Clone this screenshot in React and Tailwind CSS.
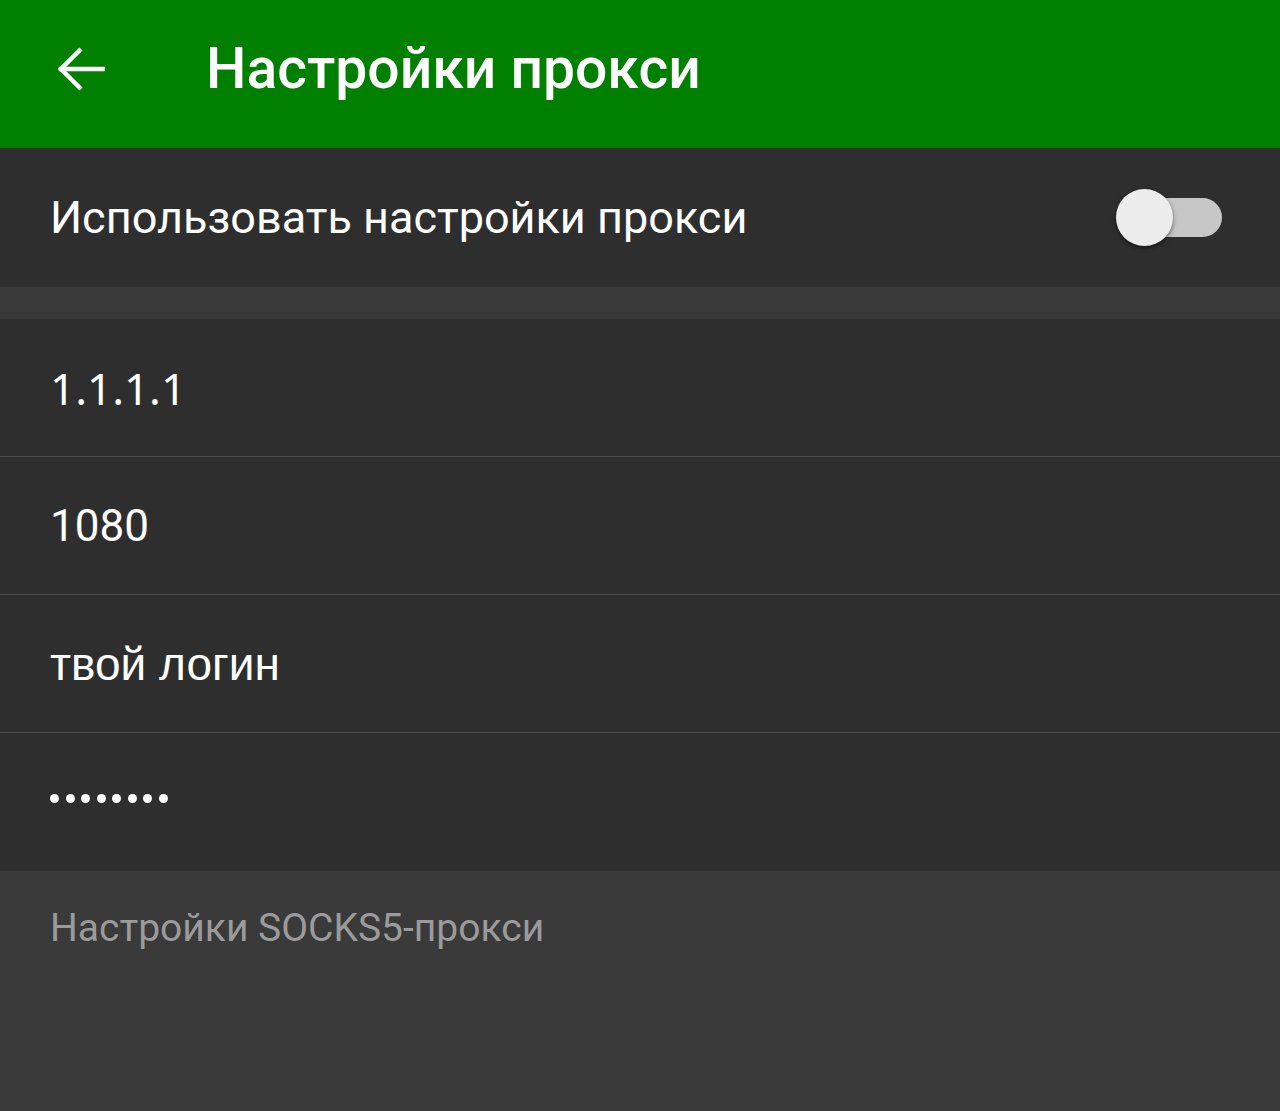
import React, { useState } from "react";

const rows = [
  { value: "1.1.1.1", font: "font-['Noto_Sans',sans-serif] text-[44px]" },
  { value: "1080", font: "font-['Roboto',sans-serif] text-[44px]" },
  { value: "твой логин", font: "font-['Liberation_Sans',sans-serif] text-[46px]" },
];

const App = () => {
  const [enabled, setEnabled] = useState(false);

  return (
    <div className="w-[1280px] h-[1111px] flex flex-col bg-[#3a3a3a] font-['Roboto',sans-serif]">
      {/* Toolbar */}
      <div className="h-[148px] bg-[#007f00] flex items-center shrink-0">
        <div className="w-[206px] pl-[57px] flex items-center pb-[10px]">
          <svg width="48" height="46" viewBox="0 0 48 46" fill="none" stroke="white" strokeWidth="4.5" strokeLinecap="square">
            <path d="M4 23H46" />
            <path d="M24 3L4 23L24 43" strokeLinecap="butt" />
          </svg>
        </div>
        <h1 className="text-white text-[57px] font-medium leading-none pb-[12px]">Настройки прокси</h1>
      </div>

      {/* Enable switch */}
      <div className="h-[139px] bg-[#2e2e2e] flex items-center justify-between pl-[50px] pr-[58px] shrink-0">
        <span className="text-white text-[45px] leading-none">Использовать настройки прокси</span>
        <button
          onClick={() => setEnabled(!enabled)}
          className="relative w-[106px] h-[57px] flex items-center"
        >
          <span className="absolute right-0 w-[92px] h-[39px] rounded-full bg-[#c6c6c6]" />
          <span className="absolute left-0 w-[57px] h-[57px] rounded-full bg-[#ececec] shadow-[0_2px_4px_rgba(0,0,0,0.5)]" />
        </button>
      </div>

      <div className="h-[32px] bg-[#393939] shrink-0" />

      {/* Fields */}
      <div className="bg-[#2e2e2e] flex flex-col shrink-0">
        {rows.map((row) => (
          <div key={row.value} className="h-[138px] border-b border-[#4b4b4b] flex items-center pl-[50px]">
            <span className={`text-white leading-none ${row.font}`}>{row.value}</span>
          </div>
        ))}
        <div className="h-[138px] flex items-center pl-[50px]">
          <div className="flex gap-[6.5px] pb-[8px]">
            {Array.from({ length: 8 }).map((_, i) => (
              <span key={i} className="w-[9px] h-[9px] rounded-full bg-white" />
            ))}
          </div>
        </div>
      </div>

      {/* Summary */}
      <div className="pl-[50px] pt-[38px]">
        <span className="text-[#9b9b9b] text-[39px] leading-none">Настройки SOCKS5-прокси</span>
      </div>
    </div>
  );
};

export default App;
